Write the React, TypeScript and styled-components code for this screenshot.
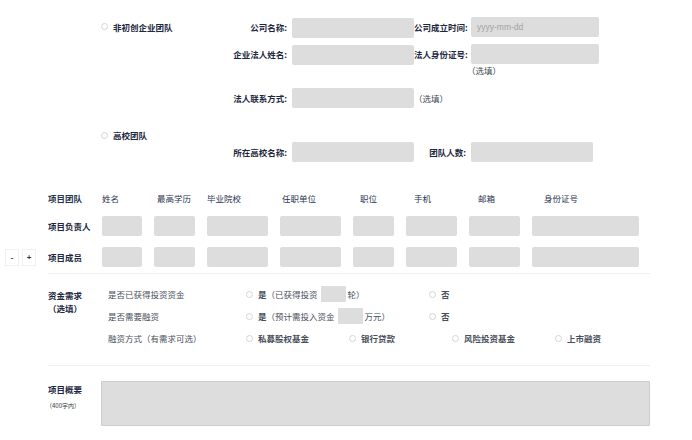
import styled, { createGlobalStyle } from 'styled-components';

const GlobalStyle = createGlobalStyle`
  html, body {
    margin: 0;
    padding: 0;
    background: #ffffff;
  }
  body {
    font-family: "Noto Sans CJK SC", "Noto Sans", sans-serif;
    font-size: 8.5px;
    color: #1d2740;
  }
`;

const Page = styled.div`
  width: 692px;
  height: 440px;
  overflow: hidden;
  box-sizing: border-box;
  padding-top: 15px;
`;

/* ---------- team type block ---------- */

const TypeBlock = styled.div`
  display: flex;
  flex-direction: column;
  padding-left: 101px;
`;

const FieldRow = styled.div<{ $top?: number; $h?: number }>`
  display: grid;
  grid-template-columns: 100px 91px 122px 57px 128px;
  align-items: center;
  height: ${(p) => p.$h ?? 20}px;
  margin-top: ${(p) => p.$top ?? 0}px;
`;

const FieldLabel = styled.span<{ $col: number }>`
  grid-column: ${(p) => p.$col};
  text-align: right;
  padding-right: 5px;
  font-weight: 700;
  white-space: nowrap;
`;

const Input = styled.div<{ $col?: number; $w?: number; $drop?: number }>`
  grid-column: ${(p) => p.$col ?? 'auto'};
  width: ${(p) => (p.$w ? `${p.$w}px` : '100%')};
  height: 20px;
  margin-top: ${(p) => p.$drop ?? 0}px;
  box-sizing: border-box;
  background: #dddddd;
  border-radius: 2px;
  display: flex;
  align-items: center;
  padding-left: 6px;
  color: #a3a3a3;
  font-family: "Liberation Sans", Arial, sans-serif;
  font-size: 8.5px;
`;

const Hint = styled.span<{ $col: number; $shift?: number }>`
  grid-column: ${(p) => p.$col};
  color: #444a57;
  white-space: nowrap;
  margin-left: ${(p) => p.$shift ?? 0}px;
`;

const RadioLabel = styled.label<{ $col?: number }>`
  grid-column: ${(p) => p.$col ?? 'auto'};
  display: inline-flex;
  align-items: center;
  gap: 5px;
  font-weight: 700;
  white-space: nowrap;
`;

const Circle = styled.span`
  width: 7px;
  height: 7px;
  border-radius: 50%;
  border: 1px solid #d4d4d4;
  box-sizing: border-box;
  background: #fff;
  flex: none;
`;

/* ---------- team table ---------- */

const TeamTable = styled.div`
  margin-top: 24px;
  display: grid;
  grid-template-columns: 36px 42px 40px 41px 61px 61px 41px 51px 51px 107px;
  column-gap: 12px;
  grid-template-rows: 25px 32px 30px;
  align-items: center;
`;

const HeadCell = styled.span<{ $shift?: number; $col?: number; $bold?: boolean }>`
  grid-column: ${(p) => p.$col ?? 'auto'};
  padding-left: ${(p) => p.$shift ?? 0}px;
  color: #2a3350;
  font-weight: ${(p) => (p.$bold ? 700 : 400)};
  white-space: nowrap;
`;

const RowLabel = styled.span`
  grid-column: 2;
  font-weight: 700;
  white-space: nowrap;
`;

const AddRemove = styled.div`
  grid-column: 1;
  display: flex;
  gap: 3px;
  padding-left: 5px;
`;

const TinyButton = styled.span`
  width: 18px;
  height: 17px;
  box-sizing: border-box;
  border: 1px solid #f1f1f1;
  display: flex;
  align-items: center;
  justify-content: center;
  font-family: "Liberation Sans", Arial, sans-serif;
  font-size: 8px;
  font-weight: 700;
  color: #333;
`;

const Divider = styled.div<{ $top: number }>`
  margin: ${(p) => p.$top}px 42px 0 48px;
  height: 1px;
  background: #efefef;
`;

/* ---------- funding ---------- */

const Funding = styled.div`
  margin-top: 9px;
  display: grid;
  grid-template-columns: 48px 60px 138px auto;
  grid-auto-rows: 22px;
  align-items: center;
`;

const FundingTitle = styled.div`
  grid-column: 2;
  grid-row: 1 / span 2;
  align-self: start;
  padding-top: 6px;
  display: flex;
  flex-direction: column;
  align-items: flex-start;
  font-weight: 700;
  line-height: 13px;
`;

const Question = styled.span`
  grid-column: 3;
  color: #4a4f5c;
  white-space: nowrap;
`;

const Options = styled.div`
  grid-column: 4;
  display: flex;
  align-items: center;
`;

const Option = styled.div<{ $w: number }>`
  width: ${(p) => p.$w}px;
  display: flex;
  align-items: center;
  white-space: nowrap;
  color: #4a4f5c;
`;

const SmallInput = styled.span`
  display: inline-block;
  width: 25px;
  height: 16px;
  margin: 0 2px 0 3px;
  background: #dddddd;
  border-radius: 1px;
`;

/* ---------- summary ---------- */

const Summary = styled.div`
  margin-top: 15px;
  display: grid;
  grid-template-columns: 53px 549px;
  padding-left: 48px;
`;

const SummaryLabel = styled.div`
  display: flex;
  flex-direction: column;
  padding-top: 2px;
  font-weight: 700;
  & > small {
    font-weight: 400;
    font-size: 6px;
    margin-top: 6px;
    margin-left: -2px;
    color: #333;
  }
`;

const TextArea = styled.div`
  height: 45px;
  background: #dddddd;
  border: 1px solid #cdcdcd;
  box-sizing: border-box;
  border-radius: 1px;
`;

const headers: [string, number][] = [
  ['姓名', 0],
  ['最高学历', 3],
  ['毕业院校', 0],
  ['任职单位', 2],
  ['职位', 7],
  ['手机', 8],
  ['邮箱', 9],
  ['身份证号', 12],
];

const financing = ['私募股权基金', '银行贷款', '风险投资基金', '上市融资'];

const InputRow = () => (
  <>
    {headers.map(([h]) => (
      <Input key={h} />
    ))}
  </>
);

export default function App() {
  return (
    <Page>
      <GlobalStyle />
      <TypeBlock>
        <FieldRow>
          <RadioLabel $col={1}>
            <Circle />
            非初创企业团队
          </RadioLabel>
          <FieldLabel $col={2}>公司名称:</FieldLabel>
          <Input $col={3} $drop={3} />
          <FieldLabel $col={4}>公司成立时间:</FieldLabel>
          <Input $col={5}>yyyy-mm-dd</Input>
        </FieldRow>
        <FieldRow $top={7}>
          <FieldLabel $col={2}>企业法人姓名:</FieldLabel>
          <Input $col={3} $drop={3} />
          <FieldLabel $col={4}>法人身份证号:</FieldLabel>
          <Input $col={5} />
        </FieldRow>
        <FieldRow $h={16}>
          <Hint $col={5} $shift={-4}>
            （选填）
          </Hint>
        </FieldRow>
        <FieldRow $top={10}>
          <FieldLabel $col={2}>法人联系方式:</FieldLabel>
          <Input $col={3} />
          <Hint $col={4} $shift={0}>
            （选填）
          </Hint>
        </FieldRow>
        <FieldRow $top={20} $h={14}>
          <RadioLabel $col={1}>
            <Circle />
            高校团队
          </RadioLabel>
        </FieldRow>
        <FieldRow $h={19}>
          <FieldLabel $col={2}>所在高校名称:</FieldLabel>
          <Input $col={3} />
          <FieldLabel $col={4}>团队人数:</FieldLabel>
          <Input $col={5} $w={122} />
        </FieldRow>
      </TypeBlock>

      <TeamTable>
        <HeadCell $col={2} $bold>
          项目团队
        </HeadCell>
        {headers.map(([h, s]) => (
          <HeadCell key={h} $shift={s}>
            {h}
          </HeadCell>
        ))}
        <RowLabel>项目负责人</RowLabel>
        <InputRow />
        <AddRemove>
          <TinyButton>-</TinyButton>
          <TinyButton>+</TinyButton>
        </AddRemove>
        <RowLabel>项目成员</RowLabel>
        <InputRow />
      </TeamTable>

      <Divider $top={1} />

      <Funding>
        <FundingTitle>
          <span>资金需求</span>
          <span>（选填）</span>
        </FundingTitle>
        <Question>是否已获得投资资金</Question>
        <Options>
          <Option $w={183}>
            <RadioLabel>
              <Circle />是
            </RadioLabel>
            （已获得投资
            <SmallInput />
            轮）
          </Option>
          <Option $w={100}>
            <RadioLabel>
              <Circle />否
            </RadioLabel>
          </Option>
        </Options>
        <Question>是否需要融资</Question>
        <Options>
          <Option $w={183}>
            <RadioLabel>
              <Circle />是
            </RadioLabel>
            （预计需投入资金
            <SmallInput />
            万元）
          </Option>
          <Option $w={100}>
            <RadioLabel>
              <Circle />否
            </RadioLabel>
          </Option>
        </Options>
        <Question>融资方式（有需求可选）</Question>
        <Options>
          {financing.map((o) => (
            <Option key={o} $w={103}>
              <RadioLabel>
                <Circle />
                {o}
              </RadioLabel>
            </Option>
          ))}
        </Options>
      </Funding>

      <Divider $top={16} />

      <Summary>
        <SummaryLabel>
          <span>项目概要</span>
          <small>（400字内）</small>
        </SummaryLabel>
        <TextArea />
      </Summary>
    </Page>
  );
}
